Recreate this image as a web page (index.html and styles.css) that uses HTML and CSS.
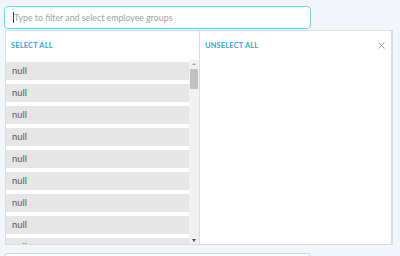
FILE: index.html
```html
<!DOCTYPE html>
<html lang="en">
<head>
  <meta charset="UTF-8">
  <title>Employee groups</title>
  <link rel="stylesheet" href="styles.css">
</head>
<body>
  <div class="picker">
    <div class="search-wrap">
      <input type="text" class="search" placeholder="Type to filter and select employee groups">
      <span class="caret"></span>
    </div>
    <div class="panel">
      <div class="col col-left">
        <div class="col-head"><a class="head-link">SELECT ALL</a></div>
        <div class="list-wrap">
          <ul class="list">
            <li>null</li>
            <li>null</li>
            <li>null</li>
            <li>null</li>
            <li>null</li>
            <li>null</li>
            <li>null</li>
            <li>null</li>
            <li>null</li>
          </ul>
          <div class="scrollbar">
            <span class="arrow arrow-up"></span>
            <div class="track"><span class="thumb"></span></div>
            <span class="arrow arrow-down"></span>
          </div>
        </div>
      </div>
      <div class="col col-right">
        <div class="col-head">
          <a class="head-link">UNSELECT ALL</a>
          <span class="close">
            <svg width="7" height="7" viewBox="0 0 7 7"><path d="M0.5 0.5 L6.5 6.5 M6.5 0.5 L0.5 6.5" stroke="#9c9c9c" stroke-width="1" fill="none"/></svg>
          </span>
        </div>
      </div>
    </div>
    <input type="text" class="search search-next">
  </div>
</body>
</html>
```

FILE: styles.css
```css
/* Выбор групп сотрудников */
:root {
  --page-bg: #f2f5f9;
  --accent: #2aa7df;
  --focus-border: #7ccbf0;
  --row-bg: #e6e6e6;
  --line: #dcdcdc;
}
body { margin:0; background:var(--page-bg); font-family:'Lato', 'Open Sans', sans-serif; }

.picker { padding:6px 8px 0 4px; }

.search-wrap { position:relative; width:307px; }
.search { display:block; box-sizing:border-box; width:307px; height:23px; margin:0; padding:0 9px; border:1.5px solid var(--focus-border); border-radius:4px; background:#fff; font-family:inherit; font-size:8.8px; color:#333; outline:none; }
.search::placeholder { color:#a0a0a0; }
.caret { position:absolute; left:9px; top:6px; width:1px; height:11px; background:#444; }
.search-next { width:307px; margin-top:8px; border:1px solid #cfd3d8; }

.panel { display:flex; box-sizing:border-box; width:388px; height:215px; margin:1px 0 0 1px; background:#fff; border:1px solid var(--line); border-right-width:2px; }
.col { display:flex; flex-direction:column; min-width:0; }
.col-left { width:193px; border-right:1px solid var(--line); }
.col-right { flex:1; }

.col-head { display:flex; align-items:center; justify-content:space-between; height:29px; padding:0 6px 0 5px; }
.head-link { font-size:7.4px; font-weight:700; letter-spacing:0.2px; color:var(--accent); cursor:pointer; }
.close { display:flex; cursor:pointer; }

.list-wrap { flex:1; display:flex; min-height:0; }
.list { flex:1; margin:0; padding:2px 0 0; list-style:none; overflow:hidden; }
.list li { height:18px; line-height:18px; margin-bottom:4px; padding-left:6px; background:var(--row-bg); font-size:9.4px; color:#5a5a5a; }

/* Полоса прокрутки */
.scrollbar { display:flex; flex-direction:column; width:10px; background:#f1f1f1; }
.track { flex:1; padding-top:1px; }
.thumb { display:block; width:8px; height:20px; margin:0 auto; background:#c1c1c1; }
.arrow { display:block; height:8px; position:relative; }
.arrow-up::after, .arrow-down::after { content:""; position:absolute; left:3px; width:0; height:0; border-left:2px solid transparent; border-right:2px solid transparent; }
.arrow-up::after { top:3px; border-bottom:2px solid #a3a3a3; }
.arrow-down::after { top:3px; border-top:3px solid #505050; }
```
